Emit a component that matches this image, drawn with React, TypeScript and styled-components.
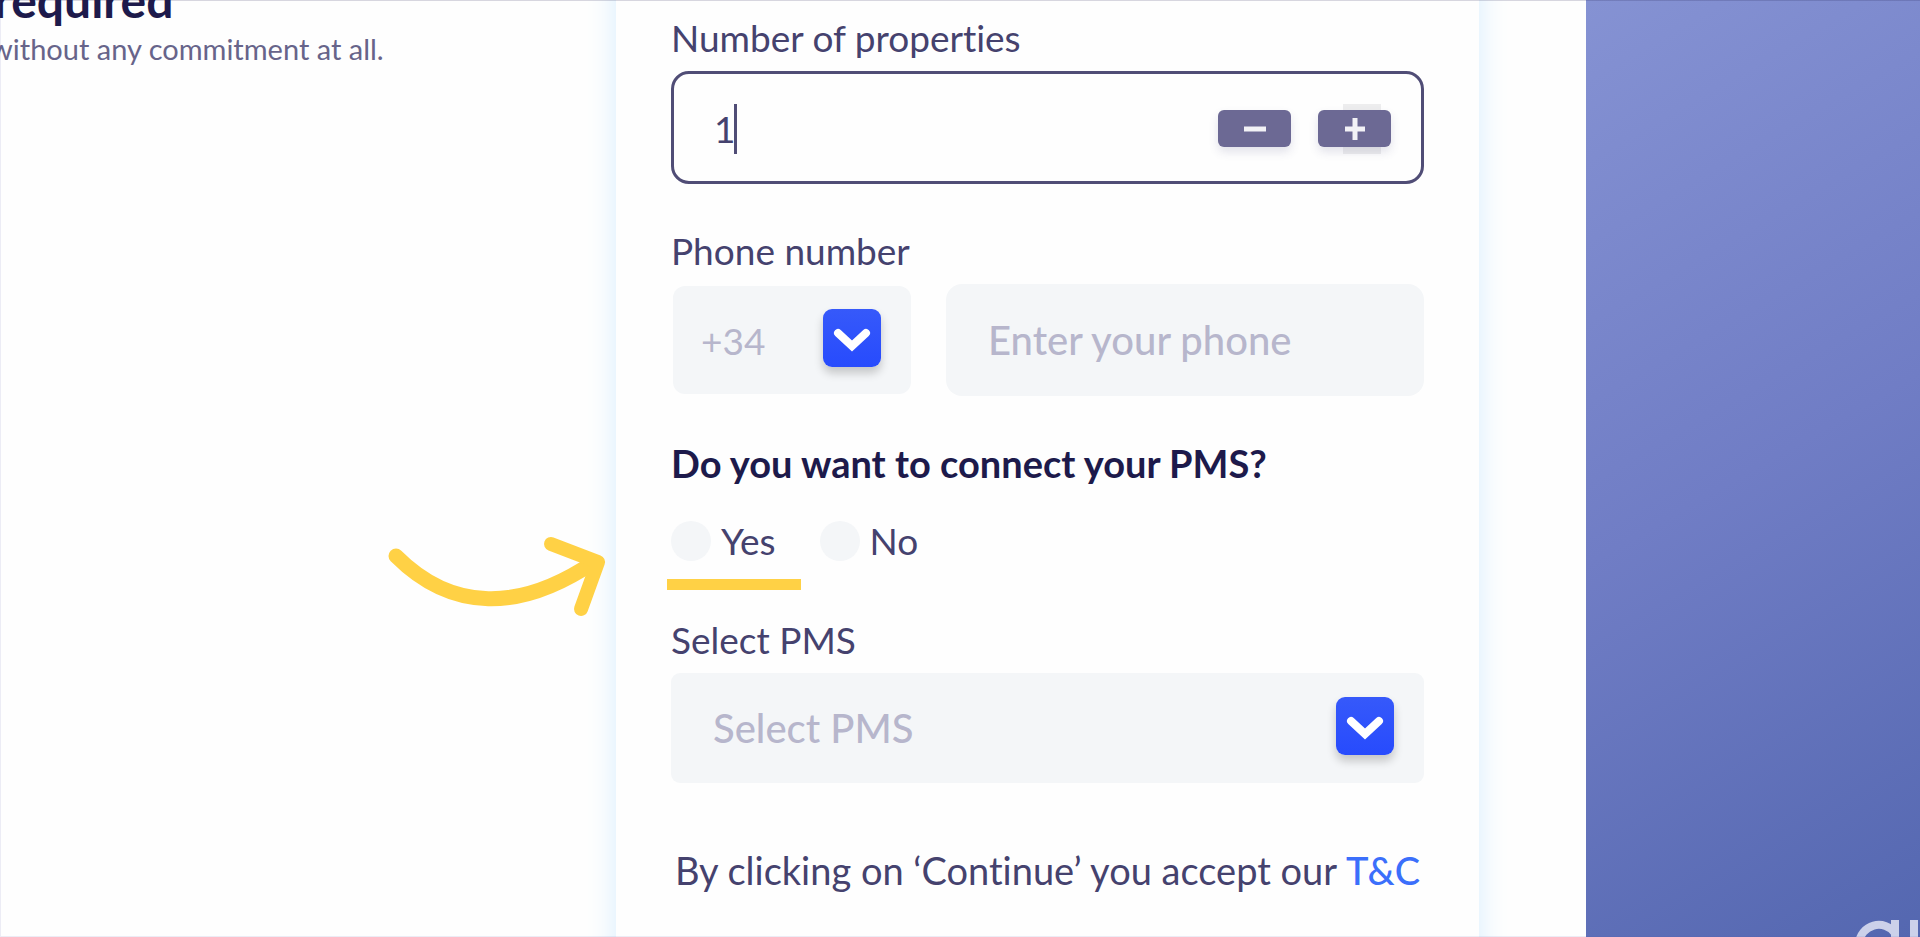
import React, { useState } from 'react';
import styled, { createGlobalStyle } from 'styled-components';

const GlobalStyle = createGlobalStyle`
  *, *::before, *::after { box-sizing: border-box; }
  body {
    margin: 0;
    background: #fefefe;
    color: #45426e;
    font-family: Lato, "Open Sans", sans-serif;
    font-variant-ligatures: none;
  }
  button, input, select { font: inherit; color: inherit; }
`;

const Page = styled.div`
  position: relative;
  display: grid;
  grid-template-columns: 616fr 863fr 107fr 334fr;
  min-height: 100vh;
  overflow: hidden;

  &::after {
    content: '';
    position: absolute;
    inset: 0;
    border: 1px solid rgba(80, 80, 170, 0.1);
    border-top-color: rgba(29, 26, 75, 0.17);
    border-right: 0;
    pointer-events: none;
  }
`;

const Intro = styled.section`
  position: relative;
  min-width: 0;
  overflow: hidden;
  white-space: nowrap;
`;

const IntroTitle = styled.h2`
  margin: -32px 0 0 -6px;
  font-size: 48px;
  line-height: 64px;
  font-weight: 700;
  color: #1d1a4b;
`;

const IntroText = styled.p`
  margin: 0 0 0 -10px;
  font-size: 29px;
  line-height: 34px;
  color: #67648a;
`;

const Arrow = styled.svg`
  position: absolute;
  right: 0;
  top: 530px;
  width: 240px;
  height: 96px;
`;

const Card = styled.form`
  min-width: 0;
  margin: -40px 0;
  padding: 55px 55px 80px;
  background: #fefefe;
  box-shadow: 0 0 28px #d8eeff;
`;

const Field = styled.div`
  display: flex;
  flex-direction: column;
  gap: 10px;
  margin-bottom: 44px;
`;

const Label = styled.label`
  font-size: 37px;
  line-height: 46px;
`;

const CounterBox = styled.div`
  display: flex;
  align-items: center;
  height: 113px;
  padding: 2px 30px 0 40px;
  border: 3px solid #504d76;
  border-radius: 18px;
`;

const CounterInput = styled.input`
  width: 20px;
  padding: 0;
  border: 0;
  outline: 0;
  background: transparent;
  font-size: 37px;
  text-align: right;
  caret-color: transparent;
`;

const Caret = styled.span`
  width: 3px;
  height: 50px;
  margin-right: auto;
  background: #504d76;
`;

const StepButton = styled.button`
  display: grid;
  place-items: center;
  width: 73px;
  height: 37px;
  margin-left: 27px;
  padding: 0;
  border: 0;
  border-radius: 6px;
  background: #6c6994;
  box-shadow: 0 5px 10px rgba(80, 80, 130, 0.16);
`;

const StepSlot = styled.span<{ $active?: boolean }>`
  display: flex;
  align-items: center;
  height: 50px;
  background: ${p => (p.$active ? 'linear-gradient(#ededee, #ededee) 52px 0 / 38px 50px no-repeat' : 'none')};
`;

const PhoneRow = styled.div`
  display: flex;
  align-items: center;
  gap: 35px;
`;

const SelectWrap = styled.div<{ $compact?: boolean }>`
  display: grid;
  align-items: center;
  ${p => (p.$compact ? 'width: 238px; margin-left: 2px;' : 'width: 100%;')}

  > * { grid-area: 1 / 1; }
`;

const Select = styled.select<{ $compact?: boolean }>`
  width: 100%;
  height: ${p => (p.$compact ? 108 : 110)}px;
  padding: 0 100px 0 ${p => (p.$compact ? 28 : 42)}px;
  border: 0;
  border-radius: ${p => (p.$compact ? 12 : 9)}px;
  outline: 0;
  appearance: none;
  background: #f4f6f8;
  color: #b7b6cc;
  font-size: ${p => (p.$compact ? 37 : 40)}px;
  font-weight: ${p => (p.$compact ? 400 : 500)};
`;

const Chevron = styled.span`
  display: grid;
  place-items: center;
  justify-self: end;
  width: 58px;
  height: 58px;
  margin: 0 30px 4px 0;
  border-radius: 9px;
  background: linear-gradient(#3659fa, #274bfd);
  box-shadow: 0 6px 10px rgba(0, 0, 0, 0.2);
  pointer-events: none;
`;

const PhoneInput = styled.input`
  flex: 1;
  min-width: 0;
  height: 112px;
  padding: 0 42px;
  border: 0;
  border-radius: 16px;
  outline: 0;
  background: #f4f6f8;
  font-size: 40px;
  font-weight: 500;

  &::placeholder { color: #b7b6cc; opacity: 1; }
`;

const Question = styled.fieldset`
  min-width: 0;
  margin: 0 0 56px;
  padding: 0;
  border: 0;
`;

const Legend = styled.legend`
  padding: 0;
  margin-bottom: 35px;
  font-size: 38px;
  line-height: 46px;
  font-weight: 700;
  color: #1d1a4b;
`;

const Options = styled.div`
  display: flex;
  gap: 44px;
`;

const Option = styled.label<{ $marked?: boolean }>`
  position: relative;
  display: flex;
  align-items: center;
  gap: 10px;
  height: 40px;
  font-size: 37px;
  line-height: 40px;

  &::after {
    content: '';
    position: absolute;
    display: ${p => (p.$marked ? 'block' : 'none')};
    left: -4px;
    top: 58px;
    width: 134px;
    height: 11px;
    background: #ffd145;
  }
`;

const Radio = styled.input`
  appearance: none;
  width: 40px;
  height: 40px;
  margin: 0;
  border-radius: 50%;
  background: #f4f6f8;

  &:checked { box-shadow: inset 0 0 0 10px #274bfd; }
`;

const Terms = styled.p`
  margin: 64px 0 0;
  font-size: 38px;
  line-height: 46px;
  text-align: center;
  white-space: nowrap;
`;

const TermsLink = styled.a`
  color: #3b6ffb;
  font-weight: 500;
  text-decoration: none;
`;

const Brand = styled.aside`
  grid-column: 4;
  display: flex;
  align-items: flex-end;
  justify-content: flex-end;
  min-height: 100vh;
  background: linear-gradient(150deg, #8592d3 0%, #707dc5 50%, #5467b0 100%);
`;

const BrandMark = styled.svg`
  width: 66px;
  height: 20px;
`;

function ChevronButton() {
  return (
    <Chevron>
      <svg width="38" height="28" viewBox="0 0 38 28" fill="none" aria-hidden="true">
        <path d="M5 9 19 22 33 9" stroke="#fff" strokeWidth="8" strokeLinecap="round" />
      </svg>
    </Chevron>
  );
}

export default function App() {
  const [count, setCount] = useState(1);
  return (
    <>
      <GlobalStyle />
      <Page>
        <Intro>
          <IntroTitle>required</IntroTitle>
          <IntroText>without any commitment at all.</IntroText>
          <Arrow viewBox="376 530 240 96" fill="none" stroke="#ffd145" strokeLinecap="round" strokeLinejoin="round" aria-hidden="true">
            <path strokeWidth="15" d="M396 556C452 612 520 612 594 562" />
            <path strokeWidth="14" d="M551 544 598 562 581 609" />
          </Arrow>
        </Intro>

        <Card onSubmit={e => e.preventDefault()}>
          <Field>
            <Label htmlFor="properties">Number of properties</Label>
            <CounterBox>
              <CounterInput
                id="properties"
                inputMode="numeric"
                value={count}
                onChange={e => setCount(Number(e.target.value) || 0)}
              />
              <Caret />
              <StepSlot>
                <StepButton type="button" aria-label="Decrease" onClick={() => setCount(Math.max(0, count - 1))}>
                  <svg width="22" height="22" viewBox="0 0 22 22" aria-hidden="true">
                    <path d="M0 11H22" stroke="#f2f2f6" strokeWidth="5" />
                  </svg>
                </StepButton>
              </StepSlot>
              <StepSlot $active>
                <StepButton type="button" aria-label="Increase" onClick={() => setCount(count + 1)}>
                  <svg width="22" height="22" viewBox="0 0 22 22" aria-hidden="true">
                    <path d="M1 11H21M11 0V22" stroke="#f2f2f6" strokeWidth="5" />
                  </svg>
                </StepButton>
              </StepSlot>
            </CounterBox>
          </Field>

          <Field>
            <Label htmlFor="phone">Phone number</Label>
            <PhoneRow>
              <SelectWrap $compact>
                <Select $compact aria-label="Country code" defaultValue="+34">
                  <option>+34</option>
                </Select>
                <ChevronButton />
              </SelectWrap>
              <PhoneInput id="phone" type="tel" placeholder="Enter your phone" />
            </PhoneRow>
          </Field>

          <Question>
            <Legend>Do you want to connect your PMS?</Legend>
            <Options>
              <Option $marked>
                <Radio type="radio" name="connect" value="yes" />
                Yes
              </Option>
              <Option>
                <Radio type="radio" name="connect" value="no" />
                No
              </Option>
            </Options>
          </Question>

          <Field>
            <Label htmlFor="pms">Select PMS</Label>
            <SelectWrap>
              <Select id="pms" defaultValue="">
                <option value="">Select PMS</option>
              </Select>
              <ChevronButton />
            </SelectWrap>
          </Field>

          <Terms>
            By clicking on ‘Continue’ you accept our <TermsLink href="#terms">T&amp;C</TermsLink>
          </Terms>
        </Card>

        <Brand>
          <BrandMark viewBox="0 0 66 20" fill="none" stroke="#ccd1ea" strokeWidth="8" aria-label="Brand logo">
            <path d="M5 26A20 20 0 0 1 41 16M41 3V20M60 3V20" />
          </BrandMark>
        </Brand>
      </Page>
    </>
  );
}
